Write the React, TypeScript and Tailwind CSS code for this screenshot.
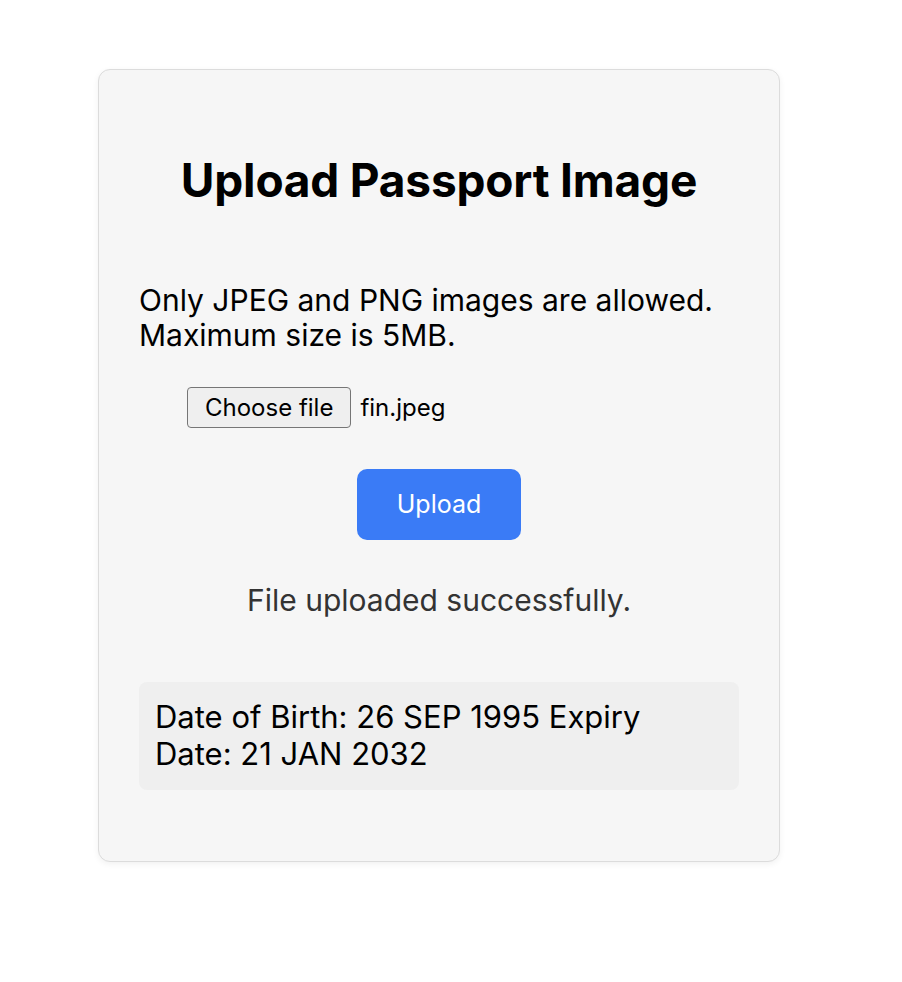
import React from 'react';

export default function App() {
  return (
    <div className="min-h-screen bg-white pl-[98px] pt-[69px]" style={{ fontFamily: 'Inter, "Noto Sans", sans-serif' }}>
      <div className="w-[682px] rounded-xl border border-[#dcdcdc] bg-[#f6f6f6] px-10 pt-[82px] pb-[71px] shadow-[0_2px_6px_rgba(0,0,0,0.06)]">
        <h1 className="text-center text-[46px] font-bold leading-[56px] tracking-[-0.2px] text-black">Upload Passport Image</h1>

        <p className="mt-[75px] text-[30px] leading-[35px] text-black">
          Only JPEG and PNG images are allowed. Maximum size is 5MB.
        </p>

        <div className="mt-[34px] flex items-center pl-12">
          <button className="h-[41px] rounded-[4px] border border-[#767676] bg-[#efefef] px-[17px] text-[24px] leading-none text-black">
            Choose file
          </button>
          <span className="ml-[9px] text-[24px] text-black">fin.jpeg</span>
        </div>

        <div className="mt-[41px] flex justify-center">
          <button className="h-[71px] w-[164px] rounded-[10px] bg-[#3a7bf6] text-[25px] text-white">Upload</button>
        </div>

        <p className="mt-[42px] text-center text-[30px] leading-[36px] text-[#333]">File uploaded successfully.</p>

        <div className="mt-[64px] rounded-lg bg-[#efefef] px-4 pt-4 pb-[18px] text-[31px] leading-[37px] text-black">
          Date of Birth: 26 SEP 1995 Expiry
          <br />
          Date: 21 JAN 2032
        </div>
      </div>
    </div>
  );
}
